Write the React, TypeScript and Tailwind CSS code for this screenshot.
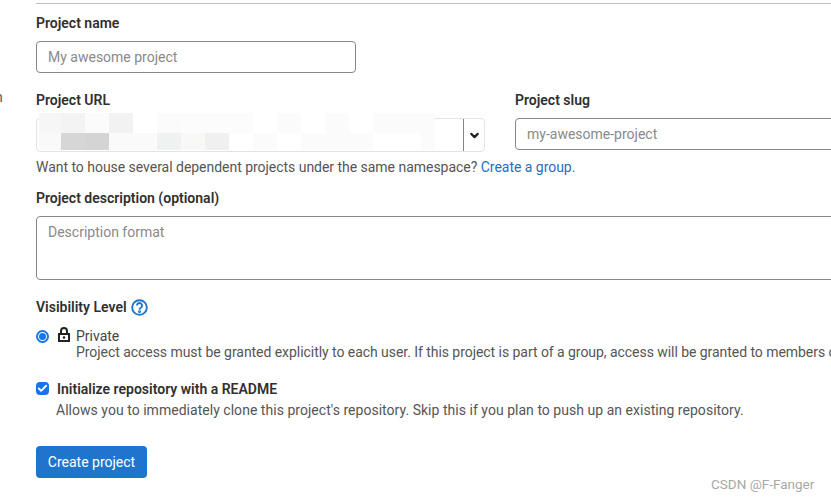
import React from 'react';
import { ChevronDown, Check } from 'lucide-react';

const row1: [number, string][] = [
  [22, 'bg-[#f6f6f6]'], [24, 'bg-[#f3f3f3]'], [24, 'bg-[#fbfbfb]'], [24, 'bg-[#f2f2f2]'], [24, 'bg-white'],
  [24, 'bg-[#fbfbfb]'], [72, 'bg-[#fcfcfc]'], [24, 'bg-white'], [24, 'bg-[#fbfbfb]'], [24, 'bg-white'],
  [24, 'bg-[#fbfbfb]'], [24, 'bg-white'], [62, 'bg-[#fbfbfb]'],
];
const row2: [number, string][] = [
  [22, 'bg-[#f9f9f9]'], [24, 'bg-[#d6d6d6]'], [24, 'bg-[#d4d4d4]'], [48, 'bg-[#fafafa]'], [24, 'bg-[#f0f1f1]'],
  [24, 'bg-[#f8f8f7]'], [24, 'bg-[#f0f0f0]'], [24, 'bg-white'], [24, 'bg-[#fbfbfb]'], [24, 'bg-white'],
  [72, 'bg-[#fbfbfb]'], [48, 'bg-white'], [14, 'bg-[#fbfbfb]'],
];

const Mosaic = ({ cells, height }: { cells: [number, string][]; height: string }) => (
  <div className={`flex ${height}`}>
    {cells.map(([w, c], i) => (
      <div key={i} className={c} style={{ width: w }} />
    ))}
  </div>
);

const App = () => {
  return (
    <div className="relative h-[501px] w-[831px] overflow-hidden bg-white font-['Roboto','Noto_Sans',sans-serif] text-[14px] leading-5 text-[#303030]">
      {/* cut off sidebar text */}
      <span className="absolute left-[-5px] top-[87px] text-[#555]">n</span>

      <div className="ml-[36px] w-[1000px] pt-[3px]">
        <div className="h-px bg-[#bfbfbf]" />

        <label className="mt-[9px] block font-semibold">Project name</label>
        <input
          placeholder="My awesome project"
          className="mt-[8px] block h-[32px] w-[320px] rounded border border-[#868686] px-[11px] placeholder:text-[#89898c]"
        />

        <div className="mt-[17px] flex">
          <div className="w-[449px]">
            <label className="block font-semibold">Project URL</label>
            <div className="relative mt-[8px] flex h-[34px] w-[449px] rounded border border-[#e3e3e3]">
              <div className="flex-1" />
              <div className="flex w-[21px] items-center justify-center border-l border-[#868686]">
                <ChevronDown size={13} strokeWidth={4} className="text-[#222]" />
              </div>
              <div className="absolute left-[2px] top-[-6px]">
                <Mosaic cells={row1} height="h-[20px]" />
                <Mosaic cells={row2} height="h-[17px]" />
              </div>
            </div>
          </div>
          <div className="ml-[30px]">
            <label className="block font-semibold">Project slug</label>
            <input
              placeholder="my-awesome-project"
              className="mt-[8px] block h-[32px] w-[400px] rounded border border-[#868686] px-[11px] placeholder:text-[#89898c]"
            />
          </div>
        </div>

        <p className="mt-[5px] tracking-[-0.03px] text-[#555]">
          Want to house several dependent projects under the same namespace?{' '}
          <a className="text-[#1f6fc0]">Create a group.</a>
        </p>

        <label className="mt-[11px] block font-semibold">Project description (optional)</label>
        <textarea
          placeholder="Description format"
          className="mt-[8px] block h-[64px] w-[900px] resize-none rounded border border-[#868686] px-[11px] py-[5px] placeholder:text-[#89898c]"
        />

        <div className="mt-[17px] flex items-center gap-[4px] font-semibold">
          Visibility Level
          <svg width="17" height="17" viewBox="0 0 16 16" fill="none" stroke="#1f75cb" strokeWidth="1.8">
            <circle cx="8" cy="8" r="6.9" />
            <path d="M5.6 6.2a2.4 2.4 0 1 1 3.7 2C8.4 8.7 8 9.1 8 10" />
            <circle cx="8" cy="12" r=".5" fill="#1f75cb" />
          </svg>
        </div>

        <div className="mt-[10px] flex">
          <div className="mt-[3px] flex h-[13px] w-[13px] items-center justify-center rounded-full border-2 border-[#1a73e8]">
            <div className="h-[7px] w-[7px] rounded-full bg-[#1a73e8]" />
          </div>
          <svg width="12" height="15" viewBox="0 0 12 15" className="ml-[9px]" fill="#222">
            <path d="M2 6V4a4 4 0 0 1 8 0v2h2v9H0V6zm2 0h4V4a2 2 0 0 0-4 0zM2 8v5h8V8zM6 9.2a1.3 1.3 0 1 0 0 2.6 1.3 1.3 0 0 0 0-2.6z" fillRule="evenodd" />
          </svg>
          <div className="ml-[6px] whitespace-nowrap">
            <div className="leading-[16px] pt-[1px] text-[#444]">Private</div>
            <div className="leading-[16px] tracking-[-0.05px] text-[#555]">
              Project access must be granted explicitly to each user. If this project is part of a group, access will be granted to members of the group.
            </div>
          </div>
        </div>

        <div className="mt-[19px] flex">
          <div className="mt-[3px] flex h-[13px] w-[13px] items-center justify-center rounded-sm bg-[#1a73e8]">
            <Check size={11} strokeWidth={4} className="text-white" />
          </div>
          <div className="ml-[8px]">
            <div className="font-semibold">Initialize repository with a README</div>
            <div className="mt-[1px] -ml-px tracking-[0.03px] text-[#555]">
              Allows you to immediately clone this project's repository. Skip this if you plan to push up an existing repository.
            </div>
          </div>
        </div>

        <button className="mt-[26px] h-[32px] w-[111px] rounded bg-[#1f75cb] text-white">Create project</button>
      </div>

      {/* watermark */}
      <span className="absolute left-[711px] top-[474px] text-[13.5px] text-[#a8a8a8]">CSDN @F-Fanger</span>
    </div>
  );
};

export default App;
